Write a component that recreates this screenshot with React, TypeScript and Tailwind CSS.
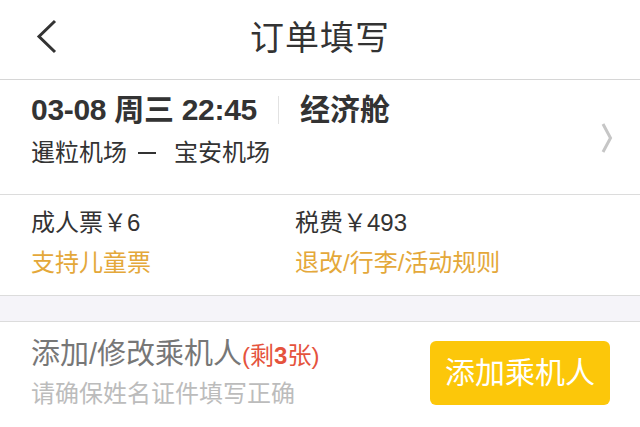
import React from "react";

const font = { fontFamily: '"Liberation Sans", "Noto Sans CJK SC", sans-serif' };

export default function App() {
  return (
    <div className="w-[640px] h-[427px] bg-white overflow-hidden text-[#333]" style={font}>
      {/* Header */}
      <div className="relative h-[80px] flex items-center justify-center border-b border-[#d6d6d6]">
        <svg className="absolute left-[34px] top-[17px]" width="28" height="40" viewBox="0 0 28 40">
          <path d="M21 4 L5 19.5 L21 35" fill="none" stroke="#333" strokeWidth="3" strokeLinecap="butt" strokeLinejoin="miter" />
        </svg>
        <div className="text-[34px] leading-none text-[#333] tracking-[1px] mt-[-4px]">订单填写</div>
      </div>

      {/* Flight */}
      <div className="h-[115px] flex items-start justify-between pl-[31px] pr-[31px] pt-[13px] border-b border-[#dcdcdc]">
        <div className="flex flex-col">
          <div className="flex items-center h-[34px]">
            <span className="text-[30px] font-bold leading-none tracking-[-0.3px]">03-08 周三 22:45</span>
            <span className="mx-[21px] w-px h-[28px] bg-[#e2e2e2]" />
            <span className="text-[30px] font-bold leading-none">经济舱</span>
          </div>
          <div className="mt-[14px] text-[24px] leading-none text-[#333] flex items-center">
            <span>暹粒机场</span>
            <span className="ml-[11px] mr-[18px] inline-block w-[18px] h-[2px] bg-[#333]" />
            <span>宝安机场</span>
          </div>
        </div>
        <svg width="14" height="32" viewBox="0 0 14 32" className="mr-[-5px] mt-[29px]">
          <path d="M3 2 L10.5 16 L3 30" fill="none" stroke="#c6c6c6" strokeWidth="3" />
        </svg>
      </div>

      {/* Price */}
      <div className="h-[101px] grid grid-cols-[264px_1fr] pl-[31px] pt-[14px] border-b border-[#dcdcdc]">
        <div className="flex flex-col">
          <div className="text-[24px] leading-[28px] text-[#333]">成人票￥6</div>
          <div className="mt-[12px] text-[24px] leading-[28px] text-[#e4a83a]">支持儿童票</div>
        </div>
        <div className="flex flex-col">
          <div className="text-[24px] leading-[28px] text-[#333]">税费￥493</div>
          <div className="mt-[12px] text-[24px] leading-[28px] text-[#e4a83a]">退改/行李/活动规则</div>
        </div>
      </div>

      {/* Gray band */}
      <div className="h-[26px] bg-[#f5f4f9] border-b border-[#dcdcdc]" />

      {/* Passenger */}
      <div className="h-[104px] flex items-start justify-between pl-[31px] pr-[30px] pt-[18px]">
        <div className="flex flex-col">
          <div className="flex items-baseline leading-none">
            <span className="text-[29px] text-[#777]">添加/修改乘机人</span>
            <span className="text-[24px] text-[#e5533d]">(剩<b>3</b>张)</span>
          </div>
          <div className="mt-[13px] text-[24px] leading-none text-[#bcbcbc]">请确保姓名证件填写正确</div>
        </div>
        <div className="w-[180px] h-[64px] mt-[1px] rounded-[6px] bg-[#fcc70a] flex items-center justify-center text-white text-[30px] leading-none">
          添加乘机人
        </div>
      </div>
    </div>
  );
}
